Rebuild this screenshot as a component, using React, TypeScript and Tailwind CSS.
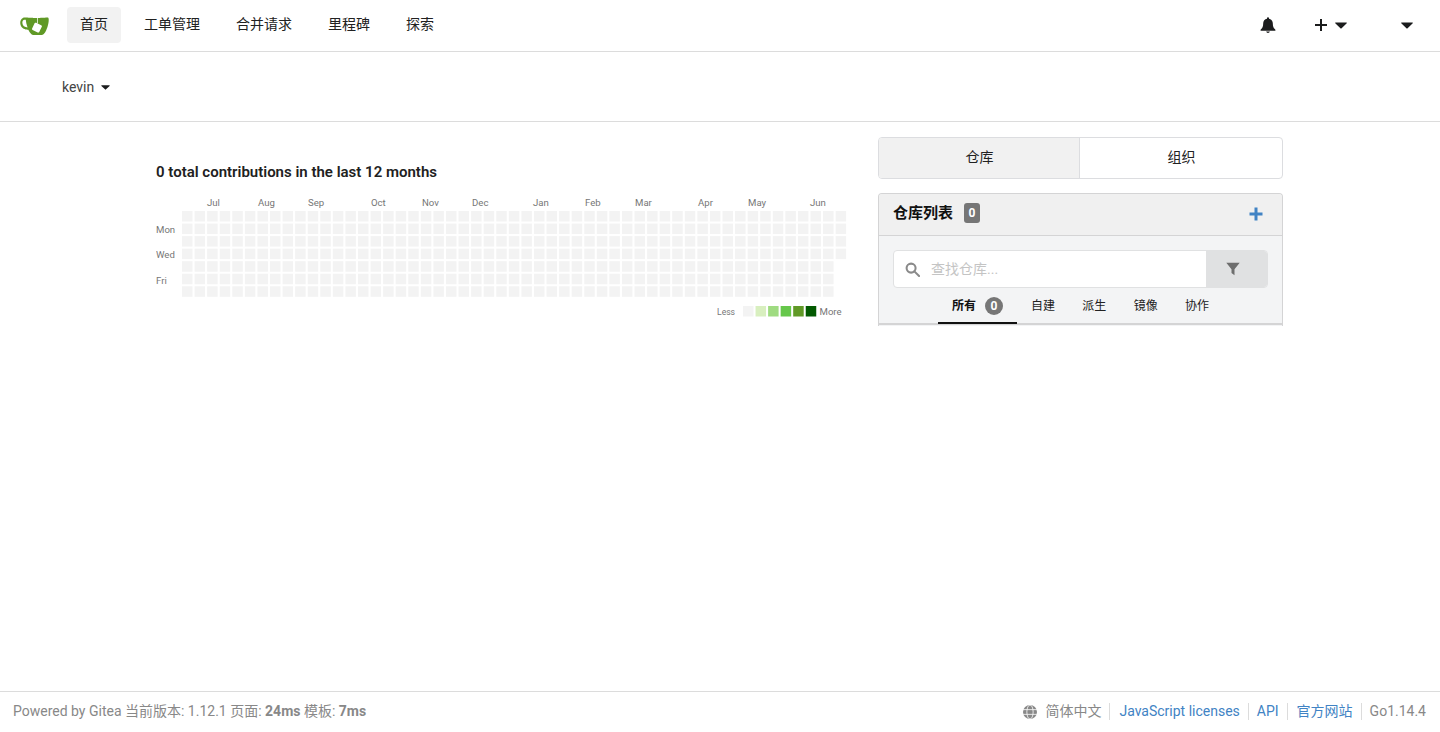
import React from "react";

const F = "font-['Roboto','Noto_Sans_CJK_SC',sans-serif]";

function Caret({ className = "" }: { className?: string }) {
  return (
    <svg viewBox="0 0 12 7" className={className} fill="currentColor">
      <path d="M0.6 0.4h10.8a.5.5 0 0 1 .35.85L6.35 6.4a.5.5 0 0 1-.7 0L.25 1.25A.5.5 0 0 1 .6.4z" />
    </svg>
  );
}

function Logo() {
  return (
    <svg viewBox="0 0 640 640" className="w-[29px] h-[29px]">
      <path d="m395.900 484.200-126.900-61c-12.500-6-17.900-21.200-11.800-33.800l61-126.900c6-12.500 21.200-17.900 33.800-11.800 17.200 8.300 27.100 13 27.100 13l-.1-109.200 16.700-.1.100 117.100s57.400 24.200 83.100 40.100c3.700 2.300 10.200 6.800 12.900 14.400 2.100 6.100 2 13.100-1 19.300l-61 126.900c-6.200 12.700-21.400 18.100-33.900 12" fill="#fff" />
      <path d="M622.700 149.800c-4.100-4.100-9.600-4-9.600-4s-117.200 6.600-177.900 8c-13.300.3-26.500.6-39.600.7v117.200c-5.500-2.600-11.100-5.300-16.600-7.900 0-36.400-.1-109.200-.1-109.200-29 .4-89.200-2.200-89.200-2.200s-141.400-7.100-156.800-8.500c-9.800-.6-22.500-2.100-39 1.500-8.700 1.800-33.500 7.400-53.800 26.900C-4.900 212.400 6.600 276.200 8 285.800c1.700 11.700 6.900 44.200 31.700 72.500 45.800 56.100 144.400 54.800 144.400 54.800s12.100 28.900 30.600 55.500c25 33.100 50.700 58.900 75.700 62 63 0 188.900-.1 188.900-.1s12 .1 28.300-10.300c14-8.500 26.500-23.400 26.500-23.400S547 483 565 451.500c5.500-9.700 10.100-19.100 14.100-28 0 0 55.200-117.100 55.200-231.100-1.100-34.500-9.600-40.600-11.600-42.600M125.600 353.900c-25.900-8.500-36.900-18.700-36.900-18.700S69.600 321.800 60 295.400c-16.500-44.200-1.400-71.200-1.400-71.200s8.400-22.500 38.500-30c13.800-3.700 31-3.100 31-3.100s7.100 59.400 15.700 94.200c7.200 29.200 24.800 77.700 24.800 77.700s-26.100-3.100-43-9.100m300.300 107.600s-6.100 14.500-19.600 15.400c-5.800.4-10.300-1.200-10.300-1.200s-.3-.1-5.300-2.100l-112.900-55s-10.900-5.700-12.800-15.600c-2.200-8.100 2.700-18.100 2.700-18.100L322 273s4.800-9.700 12.200-13c.6-.3 2.300-1 4.500-1.500 8.100-2.100 18 2.800 18 2.800L467.400 315s12.600 5.700 15.300 16.200c1.900 7.400-.5 14-1.800 17.200-6.300 15.400-55 113.100-55 113.100" fill="#609926" />
    </svg>
  );
}

function Heatmap() {
  const cols = 53;
  const rows = 7;
  const pitchX = 12.57;
  const pitchY = 12.55;
  const rects: React.ReactElement[] = [];
  for (let c = 0; c < cols; c++) {
    const n = c === cols - 1 ? 4 : rows;
    for (let r = 0; r < n; r++) {
      rects.push(
        <rect
          key={`${c}-${r}`}
          x={26 + c * pitchX}
          y={16 + r * pitchY}
          width={10.5}
          height={10.5}
          fill="#f3f3f3"
        />
      );
    }
  }
  const months: [string, number][] = [
    ["Jul", 207], ["Aug", 258], ["Sep", 308], ["Oct", 371], ["Nov", 422], ["Dec", 472],
    ["Jan", 533], ["Feb", 585], ["Mar", 635], ["Apr", 698], ["May", 748], ["Jun", 810],
  ];
  const days: [string, number][] = [["Mon", 233], ["Wed", 258], ["Fri", 284]];
  const legend = ["#f3f3f3", "#d8efbf", "#9fdb81", "#66c74b", "#609926", "#025900"];
  return (
    <svg viewBox="0 0 692 125" className="w-[692px] h-[125px] block" fontFamily="Roboto, sans-serif" fontSize="9.6" fill="#767676">
      {months.map(([m, x]) => (
        <text key={m} x={x - 156} y={11}>{m}</text>
      ))}
      {days.map(([d, y]) => (
        <text key={d} x={0} y={y - 195}>{d}</text>
      ))}
      {rects}
      <text x={561} y={120} fontSize="8.6">Less</text>
      {legend.map((c, i) => (
        <rect key={c} x={587 + i * 12.55} y={111} width={10.5} height={10.5} fill={c} />
      ))}
      <text x={663.500} y={120}>More</text>
    </svg>
  );
}

export default function App() {
  const nav = ["工单管理", "合并请求", "里程碑", "探索"];
  return (
    <div className={`${F} h-[732px] flex flex-col bg-white text-[14px] text-[#212121] overflow-hidden`}>
      <header className="h-[52px] shrink-0 border-b border-[#dcdcdc] flex items-center pb-[2px]">
        <div className="w-[67px] pl-[20px] pt-[1px] flex items-center"><Logo /></div>
        <div className="flex items-center">
          <a className="h-[36px] px-[13px] flex items-center rounded-[4px] bg-[#f2f2f2]">首页</a>
          {nav.map((n, i) => (
            <a key={n} className={`h-[36px] flex items-center ${i === 0 ? "pl-[23px]" : "pl-[36px]"}`}>{n}</a>
          ))}
        </div>
        <div className="ml-auto flex items-center text-[#1b1c1d]">
          <svg viewBox="0 0 16 16" className="w-[16px] h-[16px] mr-[38px]" fill="currentColor">
            <path d="M8 16a2 2 0 0 0 1.900-1.500H6.100A2 2 0 0 0 8 16zM8 .2a1 1 0 0 0-1 .8v.7C4.700 2.100 3.200 4 3.200 6.300c0 3.300-.8 4.700-2 5.800-.4.400-.6.700-.6 1v.6h14.800v-.6c0-.3-.2-.6-.6-1-1.200-1.100-2-2.500-2-5.800C12.800 4 11.300 2.100 9 1.700V1a1 1 0 0 0-1-.8z" />
          </svg>
          <svg viewBox="0 0 14 14" className="w-[14px] h-[14px] mr-[7px]" fill="currentColor">
            <path d="M6 1h2v5h5v2H8v5H6V8H1V6h5z" />
          </svg>
          <Caret className="w-[12px] h-[7px] mr-[54px] mt-[1px]" />
          <Caret className="w-[12px] h-[7px] mr-[27px] mt-[1px]" />
        </div>
      </header>

      <div className="h-[70px] shrink-0 border-b border-[#dcdcdc] flex items-center pl-[62px] pt-px text-[14px] text-[#444]">
        <span>kevin</span>
        <Caret className="w-[9px] h-[5px] ml-[7px] text-[#1b1c1d]" />
      </div>

      <main className="flex-1 flex items-start pl-[156px]">
        <div className="w-[722px] shrink-0 pt-[41px]">
          <h4 className="text-[15px] leading-[18px] font-semibold text-[#212121] h-[32px]">0 total contributions in the last 12 months</h4>
          <Heatmap />
        </div>
        <div className="w-[405px] shrink-0 pt-[15px]">
          <div className="h-[42px] flex border border-[#dcdde0] rounded-[4px] overflow-hidden text-[#212121] pb-[2px]">
            <div className="w-[201px] -mb-[2px] pb-[2px] pl-px bg-[#f1f1f1] border-r border-[#dcdde0] flex items-center justify-center">仓库</div>
            <div className="flex-1 pl-px flex items-center justify-center">组织</div>
          </div>
          <div className="mt-[14px] border border-b-0 border-[#d4d4d5] rounded-t-[4px] bg-[#f3f4f5] h-[133px] overflow-hidden flex flex-col">
            <div className="h-[42px] shrink-0 bg-[#f0f0f0] border-b border-[#d4d4d5] flex items-center pl-[14px] pr-[19px]">
              <span className="text-[15px] font-semibold text-[#111] -mt-[2px]">仓库列表</span>
              <span className="ml-[11px] -mt-[3px] w-[16px] h-[20px] rounded-[3px] bg-[#767676] text-white text-[12px] font-bold flex items-center justify-center">0</span>
              <svg viewBox="0 0 14 14" className="ml-auto -mt-[2px] w-[14px] h-[14px] text-[#4183c4]" fill="currentColor">
                <path d="M5.500 0.500h3v5h5v3h-5v5h-3v-5h-5v-3h5z" />
              </svg>
            </div>
            <div className="pl-[14px] pr-[14px] pt-[14px]">
              <div className="h-[38px] flex rounded-[4px] overflow-hidden border border-[#e0e1e2] bg-white">
                <div className="flex-1 flex items-center pl-[11px]">
                  <svg viewBox="0 0 16 16" className="w-[15px] h-[15px] text-[#8a8a8a]" fill="none" stroke="currentColor" strokeWidth="2.2">
                    <circle cx="6.500" cy="6.500" r="4.800" />
                    <path d="M10 10l5 5" strokeLinecap="round" />
                  </svg>
                  <span className="ml-[11px] text-[#c4c4c4]">查找仓库...</span>
                </div>
                <div className="w-[61px] -my-px pr-[8px] bg-[#e0e1e2] flex items-center justify-center text-[#6e6e6e]">
                  <svg viewBox="0 0 14 14" className="w-[14px] h-[14px]" fill="currentColor">
                    <path d="M0.300 0.800h13.400L8.500 7.200V13.300L5.500 11V7.200z" />
                  </svg>
                </div>
              </div>
            </div>
            <div className="flex pl-[59px] text-[12px] text-[#212121] h-[37px] border-b-[2px] border-[#d4d4d5]">
              <div className="w-[79px] h-[36px] pt-[2px] border-b-[2px] border-[#111] flex items-center pl-[14px] font-semibold text-[#111]">
                所有
                <span className="ml-[9px] w-[18px] h-[18px] rounded-full bg-[#767676] text-white text-[12px] font-bold flex items-center justify-center">0</span>
              </div>
              {["自建", "派生", "镜像", "协作"].map((t, i) => (
                <div key={t} className={`h-[35px] flex items-center ${i === 0 ? "ml-[14px]" : "ml-[27.3px]"}`}>{t}</div>
              ))}
            </div>
          </div>
        </div>
      </main>

      <footer className="h-[41px] shrink-0 border-t border-[#dcdcdc] flex items-center pl-[13px] pr-[14px] text-[14px] text-[#888] pb-px">
        <span>
          Powered by Gitea 当前版本: 1.12.1 页面: <b className="font-bold">24ms</b> 模板: <b className="font-bold">7ms</b>
        </span>
        <div className="ml-auto flex items-center">
          <svg viewBox="0 0 16 16" className="w-[14px] h-[14px] mr-[8px]">
            <circle cx="8" cy="8" r="8" fill="currentColor" />
            <g fill="none" stroke="#fff" strokeWidth="0.9">
              <path d="M0 5.300h16M0 10.700h16" />
              <ellipse cx="8" cy="8" rx="3.600" ry="8" />
            </g>
          </svg>
          <span>简体中文</span>
          <span className="ml-[8px] mr-[9px] w-px h-[17px] bg-[#dcdcdc]" />
          <a className="text-[#4183c4]">JavaScript licenses</a>
          <span className="ml-[8px] mr-[8px] w-px h-[17px] bg-[#dcdcdc]" />
          <a className="text-[#4183c4]">API</a>
          <span className="ml-[8px] mr-[9px] w-px h-[17px] bg-[#dcdcdc]" />
          <a className="text-[#4183c4]">官方网站</a>
          <span className="ml-[8px] mr-[8px] w-px h-[17px] bg-[#dcdcdc]" />
          <span>Go1.14.4</span>
        </div>
      </footer>
    </div>
  );
}
